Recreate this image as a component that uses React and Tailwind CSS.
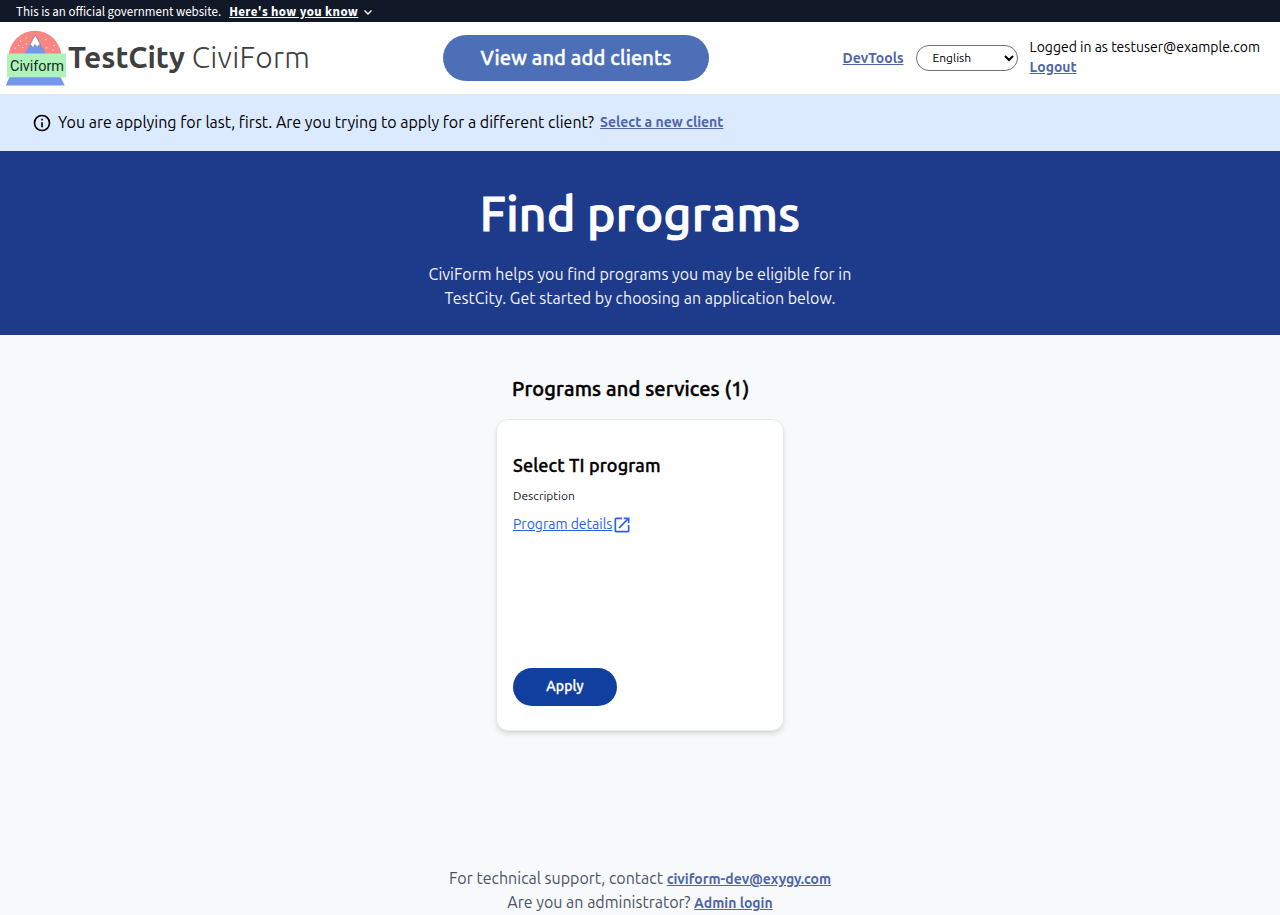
import React from 'react';

function Logo() {
  return (
    <svg className="block h-[60px] w-[64px] shrink-0" viewBox="0 0 64 60" aria-label="Civiform">
      <path d="M4.600 29 A26.400 26.200 0 0 1 57.400 29 Z" fill="#fa8583" />
      <path d="M20.500 26 L31.300 7 L42 26 Z" fill="#7496ee" />
      <path d="M25.500 17.500 L31.300 7 L36.800 17.500 L34.500 17 L33.300 19.500 L31 16.500 L29 20.300 L27.700 17.500 Z" fill="#fff" stroke="#777" strokeWidth="0.600" />
      <g fill="#ffe0e0">
        <circle cx="22" cy="10" r="0.800" /><circle cx="16.500" cy="13" r="0.800" />
        <circle cx="22.500" cy="16" r="0.800" /><circle cx="14.500" cy="17.500" r="0.800" />
        <circle cx="11" cy="20" r="0.800" /><circle cx="19" cy="19.500" r="0.800" />
        <circle cx="42" cy="11.500" r="0.800" /><circle cx="50" cy="17.500" r="0.800" />
        <circle cx="42.500" cy="20" r="0.800" /><circle cx="49" cy="22" r="0.800" />
      </g>
      <path d="M5.500 49 H56.500 L60.700 57.500 H1.700 Z" fill="#7496ee" />
      <rect x="3" y="25.500" width="59" height="23.800" fill="#aef3bb" />
      <text x="6" y="43.300" textLength="54" fontFamily="Roboto, sans-serif" fontSize="14.500" fill="#15301c">Civiform</text>
    </svg>
  );
}

function OpenInNew() {
  return (
    <svg className="mt-px block size-5" viewBox="0 0 24 24" fill="currentColor">
      <path d="M19 19H5V5h7V3H5a2 2 0 0 0-2 2v14a2 2 0 0 0 2 2h14c1.100 0 2-.9 2-2v-7h-2v7zM14 3v2h3.590l-9.830 9.830 1.410 1.410L19 6.410V10h2V3h-7z" />
    </svg>
  );
}

const link = "font-semibold text-[#4f65a8] underline text-sm";
const medium = "font-medium tracking-[0.007em] [-webkit-text-stroke:0.022em_currentColor]";

export default function App() {
  return (
    <div className="flex h-[915px] flex-col overflow-hidden bg-[#f8f9fb] font-['Ubuntu','Noto_Sans',sans-serif] text-black">
      <div className="flex h-[22px] shrink-0 items-center bg-[#111827] px-4 pt-px font-['Source_Sans_Pro','Source_Sans_3','Noto_Sans_CJK_JP',sans-serif] text-[12.93px] leading-4 text-white">
        <span>This is an official government website.</span>
        <span className="ml-2 font-bold tracking-[0.41px] underline">Here's how you know</span>
        <svg className="ml-1 size-3" viewBox="0 0 12 12" fill="none" stroke="white" strokeWidth="1.300"><path d="M2.500 4.500 L6 8 L9.500 4.500" /></svg>
      </div>

      <header className="grid h-[73px] shrink-0 grid-cols-[443px_266px_1fr] items-center border-b border-gray-200 bg-white">
        <div className="flex items-center pl-1">
          <Logo />
          <div className="-mt-0.5 whitespace-nowrap text-[30px] leading-9 text-[#404040]">
            <span className="font-semibold">TestCity</span> <span className="font-light tracking-[0.25px]">CiviForm</span>
          </div>
        </div>
        <button className={medium + " h-[46px] rounded-full bg-[#4d6fb7] text-xl text-white"}>View and add clients</button>
        <div className="flex items-center justify-end pr-5 text-sm">
          <a className={link}>DevTools</a>
          <div className="ml-3 flex h-[26px] w-[102px] items-center justify-between rounded-full border border-gray-500 pl-4 pr-[2px] text-xs">
            <span>English</span>
            <svg className="h-3 w-3" viewBox="0 0 12 12" fill="none" stroke="black" strokeWidth="2"><path d="M2 4 L6 8 L10 4" /></svg>
          </div>
          <div className="ml-3 -mt-0.5 flex flex-col">
            <span className="whitespace-nowrap">Logged in as testuser@example.com</span>
            <a className={link}>Logout</a>
          </div>
        </div>
      </header>

      <div className="flex h-14 shrink-0 items-center bg-blue-100 pl-8">
        <svg className="size-5" viewBox="0 0 24 24"><path d="M11 7h2v2h-2zm0 4h2v6h-2zm1-9a10 10 0 1 0 0 20 10 10 0 0 0 0-20zm0 18a8 8 0 1 1 0-16 8 8 0 0 1 0 16z" /></svg>
        <span className="-mt-0.5 ml-1.5">You are applying for last, first. Are you trying to apply for a different client?</span>
        <a className={link + " -mt-0.5 ml-1.5"}>Select a new client</a>
      </div>

      <section className="flex h-[184px] shrink-0 flex-col items-center bg-[#1e3a8a] pt-[38px] text-center text-white">
        <h1 className={medium + " text-5xl leading-none"}>Find programs</h1>
        <p className="mt-[25px] flex flex-col leading-6 text-gray-100">
          <span>CiviForm helps you find programs you may be eligible for in</span>
          <span>TestCity. Get started by choosing an application below.</span>
        </p>
      </section>

      <main className="mx-auto mt-10 w-72 shrink-0">
        <h2 className={medium + " pl-4 text-xl"}><span>Programs and services (1)</span></h2>
        <article className="mt-4 flex h-[312px] flex-col items-start rounded-xl border border-gray-200 bg-white px-4 pt-[31px] pb-6 shadow-md">
          <h3 className={medium + " text-lg leading-7"}>Select TI program</h3>
          <p className="mt-[9px] text-xs text-gray-900">Description</p>
          <a className="mt-2.5 flex items-center text-sm text-[#2563eb]"><span className="-mt-0.5 underline">Program details</span><OpenInNew /></a>
          <button className={medium + " mt-auto h-[38px] w-[104px] rounded-full bg-[#113f9f] pb-0.5 text-sm text-white"}>Apply</button>
        </article>
      </main>

      <footer className="mt-auto flex shrink-0 flex-col items-center pb-px leading-6 text-gray-600">
        <div><span>For technical support, contact </span><a className={link}>civiform-dev@exygy.com</a></div>
        <div><span>Are you an administrator? </span><a className={link}>Admin login</a></div>
      </footer>
    </div>
  );
}
